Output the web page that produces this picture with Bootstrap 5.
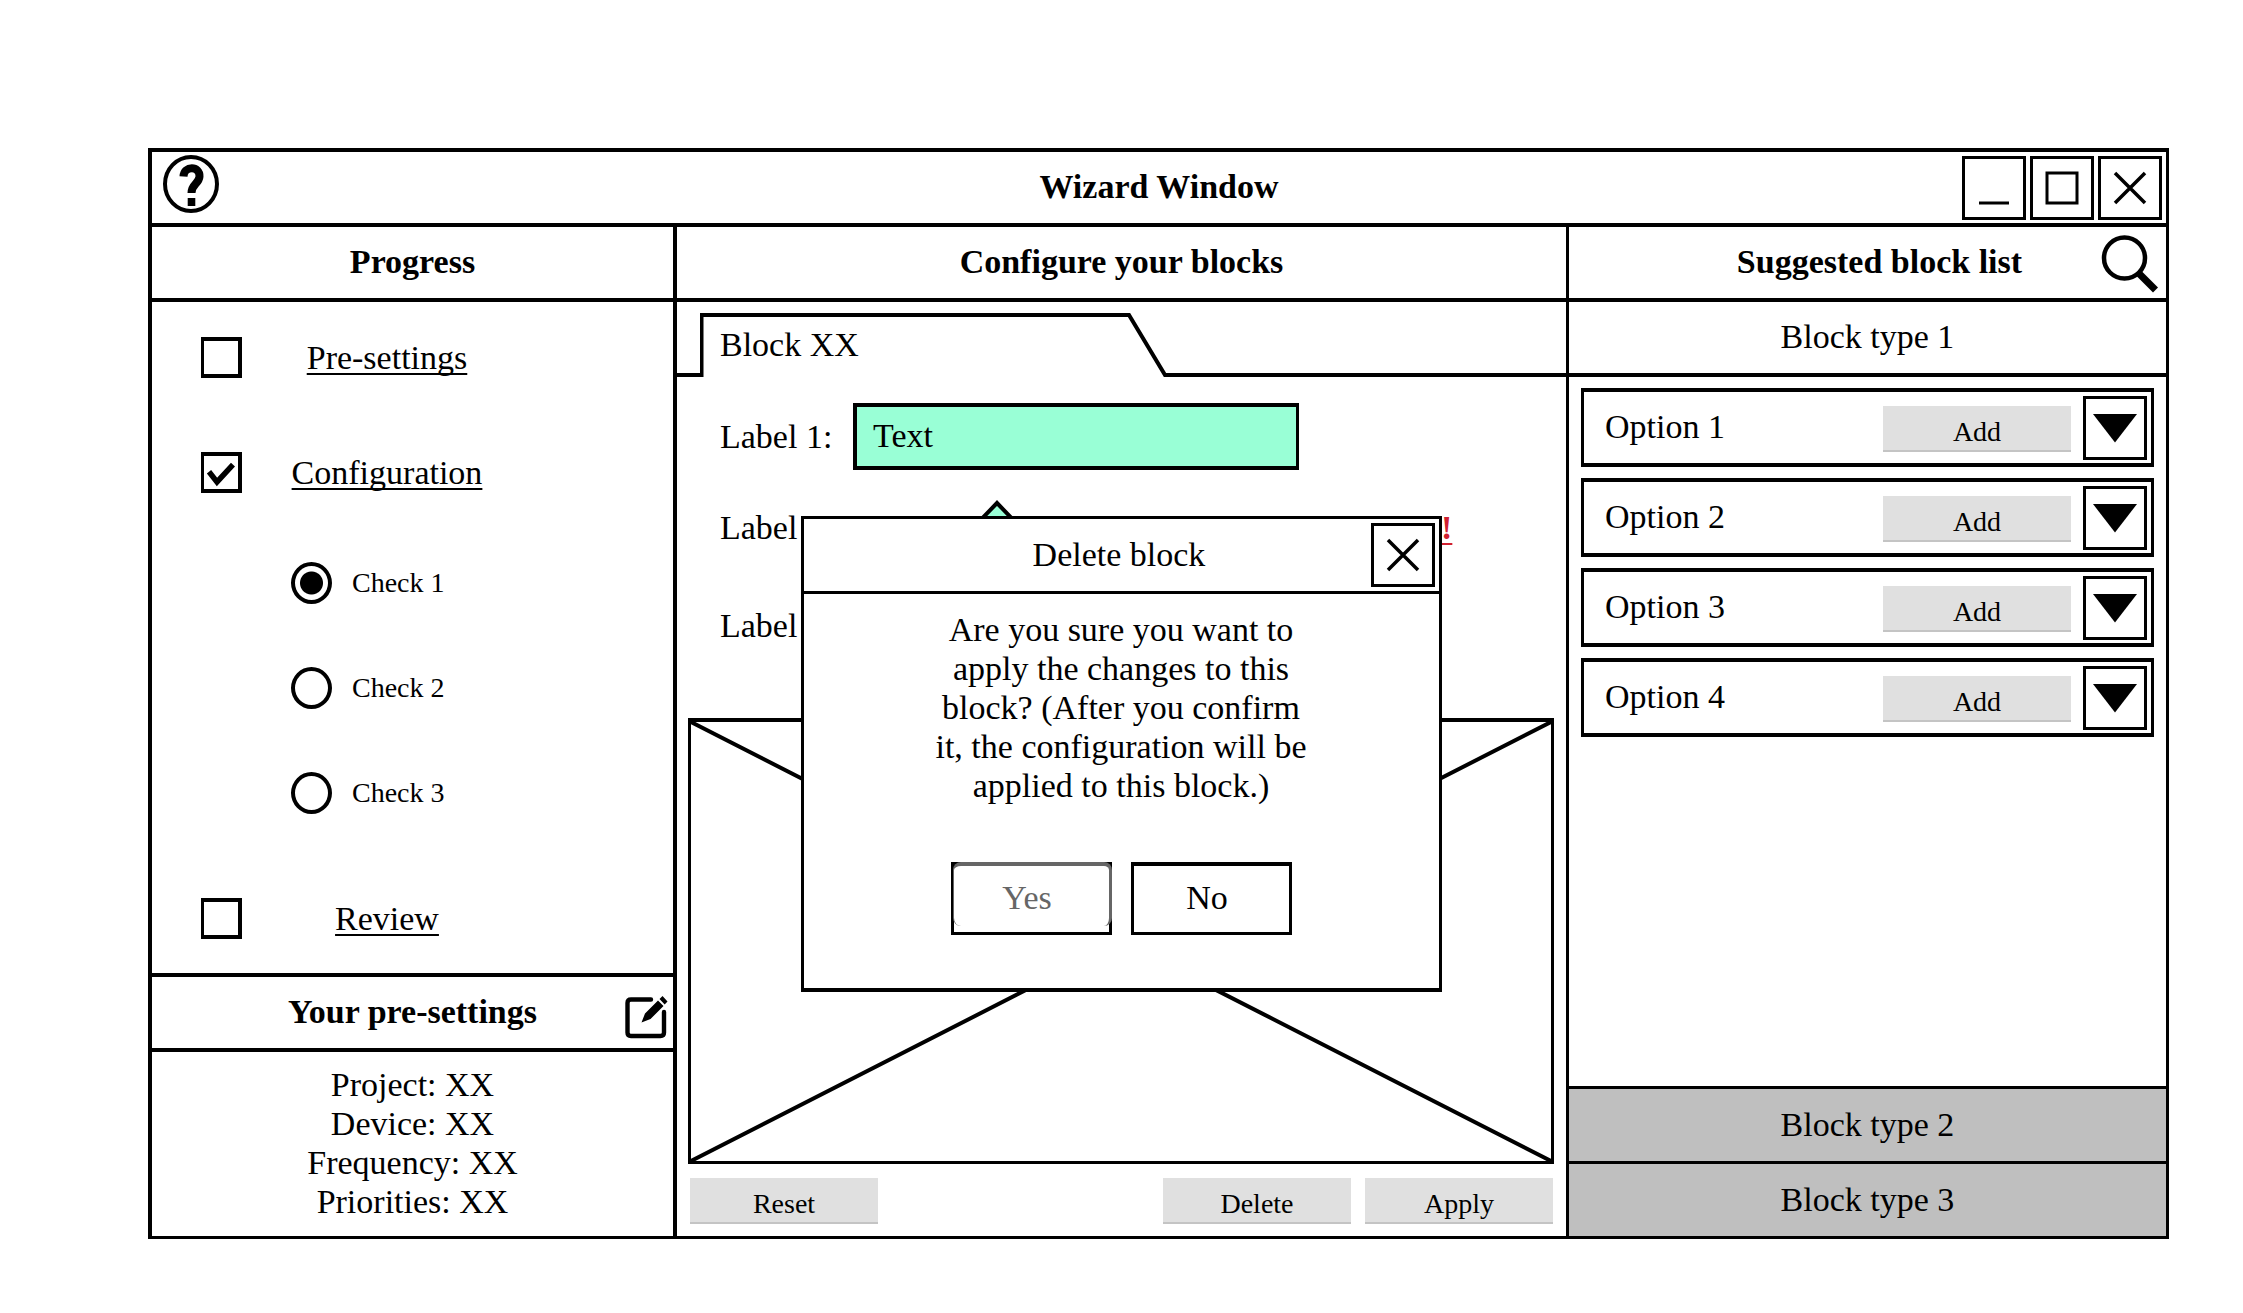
<!DOCTYPE html>
<html lang="en">
<head>
<meta charset="utf-8">
<meta name="viewport" content="width=device-width, initial-scale=1">
<title>Wizard Window</title>
<link href="https://cdn.jsdelivr.net/npm/bootstrap@5.3.0/dist/css/bootstrap.min.css" rel="stylesheet">
<style>
  body { font-family: "Liberation Serif", serif; font-size: 34px; line-height: 39px; color: #000; background: #fff; }
  button, input, a { font: inherit; color: inherit; }
  .bar-title { font-size: 34px; line-height: 39px; font-weight: 700; margin: 0; padding-bottom: 2px; }
  .bar-title.plain { font-weight: 400; }
  button { background: #fff; border: 0; padding: 0; }
  a { color: #000; text-decoration-thickness: 2px; text-underline-offset: 4px; text-decoration-skip-ink: none; }
  svg { display: block; }

  .page-pad { padding: 148px 74px 74px 148px; }
  .wizard { border: 4px solid #000; border-right-width: 3px; border-bottom-width: 3px; }
  .head-bar { display: grid; grid-template-columns: 1fr auto 1fr; align-items: center; height: 75px; border-bottom: 4px solid #000; }
  .head-bar > :first-child { justify-self: start; }
  .head-bar > :last-child { justify-self: end; }
  .head-bar.ruled { height: 79px; border-top: 4px solid #000; }
  .head-bar svg { overflow: visible; }
  .columns { display: grid; grid-template-columns: 525fr 892fr 597fr; }
  .columns > .side-left { border-right: 4px solid #000; }
  .columns > .middle { border-right: 3px solid #000; }
  .list-head { padding-left: 24px; }

  .square-btn { width: 64px; height: 64px; border: 3px solid #000; display: flex; align-items: center; justify-content: center; }
  .gray-btn { width: 188px; height: 46px; background: #e0e0e0; border-bottom: 2px solid #c4c4c4; font-size: 28px; line-height: 32px; padding-top: 7px; }

  .steps { padding: 35px 0 34px 49px; }
  .step a { width: 290px; text-align: center; }
  .steps .form-check-input { width: 41px; height: 41px; margin: 0; border: 4px solid #000; border-left-width: 3px; border-radius: 0; background-color: #fff; box-shadow: none; flex: none; }
  .steps .form-check-input:checked { background-image: url("data:image/svg+xml,%3Csvg xmlns='http://www.w3.org/2000/svg' viewBox='0 0 34 34'%3E%3Cpath d='M5 16l8 10L29 9' fill='none' stroke='%23000' stroke-width='5.500'/%3E%3C/svg%3E"); background-size: 100%; }
  .steps .form-check-input[type=radio] { height: 42px; border-width: 4px; border-radius: 50%; }
  .steps .form-check-input[type=radio]:checked { background-image: radial-gradient(circle, #000 11px, transparent 12px); }
  .radios { padding: 69px 0 84px 90px; gap: 63px; font-size: 28px; }
  .radios label { padding: 0 0 2px 20px; }
  .summary { height: 184px; padding-bottom: 2px; }

  .tab-strip { height: 75px; padding-top: 11px; }
  .tab-line { border-bottom: 4px solid #000; }
  .tab-lead { width: 23px; }
  .tab-btn { width: 466px; padding: 0 0 2px 20px; text-align: left; background: none; }
  .fields { padding: 26px 43px 59px; }
  .field-row { height: 67px; }
  .field-row.last { margin-top: 31px; }
  .field-name { width: 133px; }
  .field-row .form-control { width: 446px; height: 67px; border: 4px solid #000; border-right-width: 3px; border-radius: 0; background: #99ffd6; padding: 0 16px 2px; font-size: 34px; color: #000; }
  .hint-tip { left: 303px; top: 123px; }
  .warn { color: #d02030; font-weight: 700; margin-left: 588px; }
  .preview { margin: 0 12px 14px 11px; border: 3px solid #000; border-top-width: 4px; }
  .preview svg { position: absolute; inset: 0; width: 100%; height: 100%; }
  .block-actions { padding: 0 13px 12px; gap: 14px; }

  .dialog-box { position: absolute; top: 289px; left: 50%; margin-left: -321px; width: 641px; background: #fff; border: 3px solid #000; border-bottom-width: 4px; }
  .dialog-box .head-bar { border-bottom-width: 3px; padding-right: 4px; }
  .dialog-copy { max-width: 384px; margin: 16px auto 57px; text-align: center; }
  .dialog-actions { gap: 19px; padding-bottom: 53px; }
  .answer-btn { position: relative; width: 161px; height: 73px; border: 3px solid #000; border-top-width: 4px; padding: 0 8px 4px 0; }
  .answer-btn.dimmed { color: #666; }
  .answer-btn.dimmed::after { content: ""; position: absolute; inset: -4px -3px 6px -1px; border: 4px solid #666; border-width: 4px 3px 0 1px; border-radius: 8px; }

  .options { padding: 11px 12px 0; gap: 11px; }
  .option-row { height: 79px; border: 4px solid #000; border-right-width: 3px; border-left-width: 3px; padding: 0 4px 0 21px; }
  .option-row .gray-btn { margin: 3px 12px 0 0; }
  .option-row span { padding-bottom: 2px; }
  .type-btn { height: 75px; display: block; width: 100%; border-top: 3px solid #000; background: #bfbfbf; padding-bottom: 2px; }
  .type-open { height: 75px; border-bottom: 4px solid #000; background: #fff; width: 100%; padding-bottom: 2px; }
</style>
<script src="https://cdn.jsdelivr.net/npm/bootstrap@5.3.0/dist/js/bootstrap.bundle.min.js"></script>
</head>
<body>
<div class="page-pad min-vh-100 d-flex">
  <main class="wizard flex-grow-1 d-flex flex-column">
    <header class="head-bar">
      <button type="button" class="ms-2" aria-label="Help">
        <svg class="mb-2 ms-1" width="56" height="58" viewBox="0 0 56 58"><ellipse cx="27" cy="29" rx="26" ry="27" fill="none" stroke="#000" stroke-width="4"/><path d="M19.500 21.500C20 10.500 36 10.500 35.500 21.500C35 29 27.500 29 27.500 38" fill="none" stroke="#000" stroke-width="8"/><path d="M23.700 43h7.600v8h-7.600z"/></svg>
      </button>
      <h1 class="bar-title">Wizard Window</h1>
      <div class="d-flex gap-1 pe-1">
        <button type="button" class="square-btn" aria-label="Minimize"><svg width="32" height="36" viewBox="0 0 32 36"><path d="M1 33h30" stroke="#000" stroke-width="3"/></svg></button>
        <button type="button" class="square-btn" aria-label="Maximize"><svg width="34" height="34" viewBox="0 0 34 34"><path d="M2 2h30v30H2z" fill="none" stroke="#000" stroke-width="3"/></svg></button>
        <button type="button" class="square-btn" aria-label="Close"><svg width="34" height="34" viewBox="0 0 34 34"><path d="M2 2l30 30M32 2L2 32" stroke="#000" stroke-width="3.500"/></svg></button>
      </div>
    </header>

    <div class="columns flex-grow-1">
      <section class="side-left d-flex flex-column">
        <div class="head-bar"><span></span><h2 class="bar-title">Progress</h2><span></span></div>
        <form class="steps flex-grow-1 d-flex flex-column">
          <div class="step d-flex align-items-center"><input class="form-check-input" type="checkbox" id="s1" aria-labelledby="t1"><a href="#" id="t1">Pre-settings</a></div>
          <div class="flex-grow-1"></div>
          <div class="step d-flex align-items-center"><input class="form-check-input" type="checkbox" id="s2" aria-labelledby="t2" checked><a href="#" id="t2">Configuration</a></div>
          <div class="radios d-flex flex-column">
            <div class="d-flex align-items-center"><input class="form-check-input" type="radio" name="check" id="c1" checked><label for="c1">Check 1</label></div>
            <div class="d-flex align-items-center"><input class="form-check-input" type="radio" name="check" id="c2"><label for="c2">Check 2</label></div>
            <div class="d-flex align-items-center"><input class="form-check-input" type="radio" name="check" id="c3"><label for="c3">Check 3</label></div>
          </div>
          <div class="step d-flex align-items-center"><input class="form-check-input" type="checkbox" id="s3" aria-labelledby="t3"><a href="#" id="t3">Review</a></div>
        </form>
        <div class="head-bar ruled"><span></span><h2 class="bar-title">Your pre-settings</h2>
          <button type="button" class="me-1 pt-2" aria-label="Edit pre-settings">
            <svg width="44" height="44" viewBox="0 0 44 44"><path d="M26 4.500H6Q2.500 4.500 2.500 8v29.500Q2.500 41 6 41h29.500q3.500 0 3.500-3.500V17" fill="none" stroke="#000" stroke-width="4.400" stroke-linecap="round"/><path d="M16.500 27.500l3.500-9L33 5.500l5.500 5.500-13 13zM34.500 4L37.500 1l5 5.500-2.800 3z"/></svg>
          </button>
        </div>
        <div class="summary d-flex flex-column justify-content-center text-center">
          <div>Project: XX</div><div>Device: XX</div><div>Frequency: XX</div><div>Priorities: XX</div>
        </div>
      </section>

      <section class="middle d-flex flex-column position-relative">
        <div class="head-bar"><span></span><h2 class="bar-title">Configure your blocks</h2><span></span></div>
        <div class="tab-strip d-flex">
          <div class="tab-line tab-lead"></div>
          <button type="button" class="tab-btn position-relative">
            <svg class="position-absolute top-0 start-0" width="466" height="64" viewBox="0 0 466 64"><path d="M0 62h1.500V2H429l36 60h1" fill="none" stroke="#000" stroke-width="4"/></svg>
            Block XX
          </button>
          <div class="tab-line flex-grow-1"></div>
        </div>
        <form class="fields position-relative">
          <div class="field-row d-flex align-items-center mb-4"><label class="field-name" for="f1">Label 1:</label><input class="form-control" id="f1" type="text" value="Text"></div>
          <div class="field-row d-flex align-items-center"><span class="field-name">Label</span><a href="#" class="warn">!</a></div>
          <div class="field-row last d-flex align-items-center"><span class="field-name">Label</span></div>
          <svg class="hint-tip position-absolute" width="34" height="30" viewBox="0 0 34 30"><path d="M-7 28L17 3l24 25" fill="#99ffd6" stroke="#000" stroke-width="4"/></svg>
        </form>
        <div class="preview flex-grow-1 position-relative">
          <svg viewBox="0 0 100 100" preserveAspectRatio="none"><path d="M0 0L100 100M100 0L0 100" stroke="#000" stroke-width="4" vector-effect="non-scaling-stroke"/></svg>
        </div>
        <div class="block-actions d-flex">
          <button type="button" class="gray-btn me-auto">Reset</button>
          <button type="button" class="gray-btn">Delete</button>
          <button type="button" class="gray-btn">Apply</button>
        </div>

        <div class="dialog-box" role="dialog" aria-labelledby="dt">
          <div class="head-bar"><span></span><h2 class="bar-title plain" id="dt">Delete block</h2>
            <button type="button" class="square-btn" aria-label="Close dialog"><svg width="34" height="34" viewBox="0 0 34 34"><path d="M2 2l30 30M32 2L2 32" stroke="#000" stroke-width="3.500"/></svg></button>
          </div>
          <p class="dialog-copy">Are you sure you want to apply the changes to this block? (After you confirm it, the configuration will be applied to this block.)</p>
          <div class="dialog-actions d-flex justify-content-center">
            <button type="button" class="answer-btn dimmed">Yes</button>
            <button type="button" class="answer-btn">No</button>
          </div>
        </div>
      </section>

      <section class="d-flex flex-column">
        <div class="head-bar list-head"><span></span><h2 class="bar-title">Suggested block list</h2>
          <button type="button" class="me-1 pe-1" aria-label="Search">
            <svg width="58" height="58" viewBox="0 0 58 58"><ellipse cx="24.500" cy="24" rx="20.500" ry="20.500" fill="none" stroke="#000" stroke-width="4.500"/><path d="M38 38.500L55.500 56" stroke="#000" stroke-width="7"/></svg>
          </button>
        </div>
        <button type="button" class="type-open">Block type 1</button>
        <div class="options d-flex flex-column flex-grow-1">
          <div class="option-row d-flex align-items-center"><span class="me-auto">Option 1</span><button type="button" class="gray-btn">Add</button><button type="button" class="square-btn" aria-label="Expand option 1"><svg width="44" height="30" viewBox="0 0 44 30"><path d="M0 1h44L22 29.500z"/></svg></button></div>
          <div class="option-row d-flex align-items-center"><span class="me-auto">Option 2</span><button type="button" class="gray-btn">Add</button><button type="button" class="square-btn" aria-label="Expand option 2"><svg width="44" height="30" viewBox="0 0 44 30"><path d="M0 1h44L22 29.500z"/></svg></button></div>
          <div class="option-row d-flex align-items-center"><span class="me-auto">Option 3</span><button type="button" class="gray-btn">Add</button><button type="button" class="square-btn" aria-label="Expand option 3"><svg width="44" height="30" viewBox="0 0 44 30"><path d="M0 1h44L22 29.500z"/></svg></button></div>
          <div class="option-row d-flex align-items-center"><span class="me-auto">Option 4</span><button type="button" class="gray-btn">Add</button><button type="button" class="square-btn" aria-label="Expand option 4"><svg width="44" height="30" viewBox="0 0 44 30"><path d="M0 1h44L22 29.500z"/></svg></button></div>
        </div>
        <button type="button" class="type-btn">Block type 2</button>
        <button type="button" class="type-btn">Block type 3</button>
      </section>
    </div>
  </main>
</div>
</body>
</html>
